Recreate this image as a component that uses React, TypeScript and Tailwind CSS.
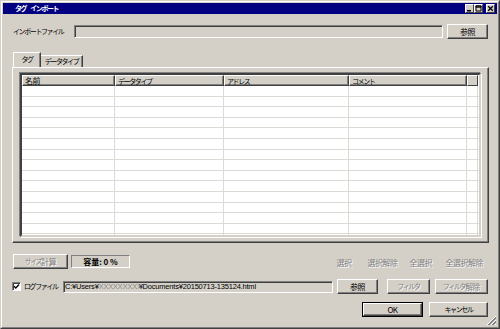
import React from "react"

const kana = "text-[7px] tracking-[-1.4px]"

const cols = [
  { label: "名前", w: "w-[93px]", k: false },
  { label: "データタイプ", w: "w-[109px]", k: true },
  { label: "アドレス", w: "w-[125px]", k: true },
  { label: "コメント", w: "w-[118px]", k: true },
]

const rows = Array.from({ length: 15 }, (_, i) => i)

function Btn({ children, w, disabled, def }: { children: React.ReactNode; w: string; disabled?: boolean; def?: boolean }) {
  const inner = (
    <div
      className={`flex h-full w-full items-center justify-center whitespace-nowrap border border-t-white border-l-white border-r-[#404040] border-b-[#404040] shadow-[inset_-1px_-1px_0_#808080] ${
        disabled ? "text-[#808080] [text-shadow:1px_1px_0_#fff]" : "text-black"
      }`}
    >
      {children}
    </div>
  )
  if (def) return <div className={`${w} h-[15px] border border-black`}>{inner}</div>
  return <div className={`${w} h-[15px]`}>{inner}</div>
}

function TitleBtn({ kind }: { kind: "min" | "max" | "close" }) {
  return (
    <div className="flex h-[9px] w-[9px] items-center justify-center border border-t-white border-l-white border-r-[#404040] border-b-[#404040] bg-[#d4d0c8]">
      <svg width="7" height="7" viewBox="0 0 7 7">
        {kind === "min" && <rect x="1" y="5" width="4" height="1.5" fill="#000" />}
        {kind === "max" && <path d="M1 1h5v5h-5z M1 1h5v1.2h-5z" fill="none" stroke="#000" strokeWidth="1" />}
        {kind === "close" && <path d="M1.2 1.2L5.8 5.8M5.8 1.2L1.2 5.8" stroke="#000" strokeWidth="1.3" />}
      </svg>
    </div>
  )
}

export default function App() {
  return (
    <div className="h-[329px] w-[500px] bg-[#d4d0c8] text-[8px] leading-none tracking-[-0.5px] text-black font-['Noto_Sans_CJK_JP','Noto_Sans',sans-serif]">
      <div className="relative flex h-full w-full flex-col border border-t-[#d4d0c8] border-l-[#d4d0c8] border-r-[#404040] border-b-[#404040]">
        <div className="flex h-full flex-col border border-t-white border-l-white border-r-[#808080] border-b-[#808080] p-[1px]">
          {/* title bar */}
          <div className="flex h-[11px] items-center justify-between bg-[#000080] pl-[12px] pr-[2px]">
            <span className={`${kana} flex items-center whitespace-nowrap font-bold text-white`}>
              <span>タグ</span>
              <span className="ml-[4px]">インポート</span>
            </span>
            <div className="flex items-center">
              <TitleBtn kind="min" />
              <TitleBtn kind="max" />
              <div className="w-[3px]" />
              <TitleBtn kind="close" />
            </div>
          </div>

          {/* import file row */}
          <div className="mt-[10px] flex h-[15px] items-center pl-[10px]">
            <span className={`${kana} w-[61px] whitespace-nowrap`}>インポートファイル</span>
            <div className="h-[13px] w-[369px] border border-t-[#808080] border-l-[#808080] border-r-white border-b-white shadow-[inset_1px_1px_0_#404040]" />
            <div className="ml-[4px]">
              <Btn w="w-[41px]">参照</Btn>
            </div>
          </div>

          {/* tabs */}
          <div className="mt-[14px] flex h-[14px] items-end pl-[10px]">
            <div className={`${kana} relative z-10 flex h-[15px] w-[28px] items-center justify-center whitespace-nowrap border border-b-0 border-t-white border-l-white border-r-[#404040] bg-[#d4d0c8] pb-[1px] shadow-[inset_-1px_0_0_#808080]`}>
              タグ
            </div>
            <div className={`${kana} flex h-[12px] w-[42px] items-center justify-center whitespace-nowrap border border-b-0 border-t-white border-l-0 border-r-[#404040] shadow-[inset_-1px_0_0_#808080]`}>
              データタイプ
            </div>
          </div>

          {/* tab panel */}
          <div className="ml-[9px] h-[176px] w-[477px] border border-t-white border-l-white border-r-[#404040] border-b-[#404040] shadow-[inset_-1px_-1px_0_#808080] pl-[7px] pt-[5px]">
            <div className="flex h-[164px] w-[461px] flex-col border-2 border-t-[#404040] border-l-[#404040] border-r-[#d4d0c8] border-b-[#d4d0c8] bg-white shadow-[-1px_-1px_0_#808080,1px_1px_0_#fff]">
              <div className="flex h-[11px] shrink-0">
                {cols.map((c) => (
                  <div
                    key={c.label}
                    className={`${c.w} ${c.k ? kana : ""} flex items-center whitespace-nowrap border border-t-white border-l-white border-r-[#404040] border-b-[#404040] bg-[#d4d0c8] pl-[2px] pt-[1px] shadow-[inset_-1px_-1px_0_#808080]`}
                  >
                    {c.label}
                  </div>
                ))}
                <div className="w-[11px] border border-t-white border-l-white border-r-[#404040] border-b-[#404040] bg-[#d4d0c8]" />
              </div>
              <div className="flex-1 overflow-hidden">
                {rows.map((r) => (
                  <div key={r} className="flex h-[10.6px] border-b border-[#dcdad4]">
                    {cols.map((c) => (
                      <div key={c.label} className={`${c.w} border-r border-[#dcdad4]`} />
                    ))}
                    <div className="w-[11px] border-r border-[#dcdad4]" />
                  </div>
                ))}
              </div>
            </div>
          </div>

          {/* size row */}
          <div className="mt-[11px] flex h-[15px] items-center pl-[10px] pr-[14px]">
            <Btn w="w-[55px]" disabled>
              <span className={kana}>サイズ</span>計算
            </Btn>
            <div className="ml-[3px] flex h-[13px] w-[59px] items-center justify-center whitespace-pre border border-t-[#808080] border-l-[#808080] border-r-white border-b-white font-bold tracking-normal">
              容量: 0 %
            </div>
            <div className="ml-auto flex items-center whitespace-nowrap pt-[2px] text-[#808080] [text-shadow:1px_1px_0_#fff]">
              <span className="w-[31px]">選択</span>
              <span className="w-[42px]">選択解除</span>
              <span className="w-[36px]">全選択</span>
              <span>全選択解除</span>
            </div>
          </div>

          {/* log file row */}
          <div className="mt-[10px] flex h-[15px] items-center pl-[9px]">
            <div className="flex h-[9px] w-[9px] items-center justify-center border border-t-[#808080] border-l-[#808080] border-r-white border-b-white bg-white shadow-[inset_1px_1px_0_#404040]">
              <svg width="7" height="7" viewBox="0 0 7 7">
                <path d="M1 3.2L2.8 5L6 1.6" fill="none" stroke="#000" strokeWidth="1.4" />
              </svg>
            </div>
            <span className={`${kana} ml-[3px] w-[39px] whitespace-nowrap`}>ログファイル</span>
            <div className="flex h-[12px] w-[270px] items-center overflow-hidden whitespace-nowrap border border-t-[#808080] border-l-[#808080] border-r-white border-b-white pl-[1px] font-['Liberation_Sans','Noto_Sans_CJK_JP',sans-serif] text-[7.5px] tracking-[-0.2px] shadow-[inset_1px_1px_0_#404040]">
              C:¥Users¥<span className="inline-block w-[40px] text-[#8c8c8c] [filter:blur(0.6px)]">XXXXXXXXX</span>¥Documents¥20150713-135124.html
            </div>
            <div className="ml-[4px]">
              <Btn w="w-[41px]">参照</Btn>
            </div>
            <div className="ml-[9px]">
              <Btn w="w-[43px]" disabled>
                <span className={kana}>フィルタ</span>
              </Btn>
            </div>
            <div className="ml-[5px]">
              <Btn w="w-[53px]" disabled>
                <span className={kana}>フィルタ</span>解除
              </Btn>
            </div>
          </div>

          {/* ok / cancel */}
          <div className="mt-[8px] flex h-[15px] items-center justify-end pr-[9px]">
            <Btn w="w-[61px]" def>
              OK
            </Btn>
            <div className="ml-[6px]">
              <Btn w="w-[59px]">
                <span className={kana}>キャンセル</span>
              </Btn>
            </div>
          </div>
        </div>

        {/* resize grip */}
        <svg className="absolute bottom-[2px] right-[2px]" width="11" height="11" viewBox="0 0 11 11">
          <path d="M10 1L1 10M10 5L5 10M10 9L9 10" stroke="#fff" strokeWidth="1" />
          <path d="M10 2L2 10M10 3L3 10M10 6L6 10M10 7L7 10" stroke="#808080" strokeWidth="1" />
        </svg>
      </div>
    </div>
  )
}
